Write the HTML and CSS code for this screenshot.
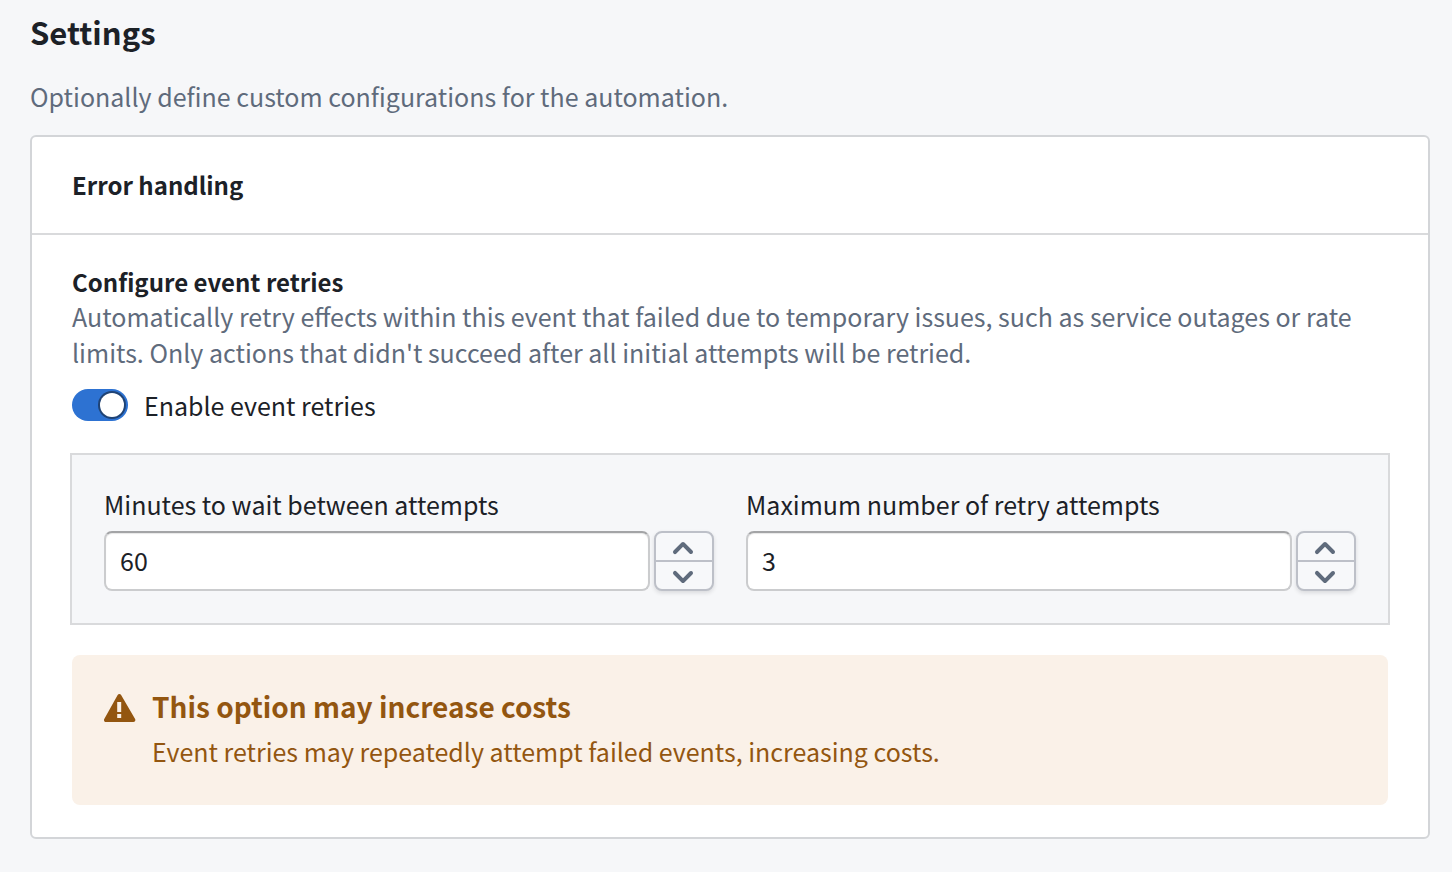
FILE: index.html
```html
<!DOCTYPE html>
<html lang="en">
    <head>
        <meta charset="utf-8">
        <meta name="viewport" content="width=device-width, initial-scale=1">
        <title>Settings</title>
        <link rel="stylesheet" href="styles.css">
    </head>
    <body>
      <main class="settings">
        <h1 class="title">Settings</h1>
        <p class="muted">Optionally define custom configurations for the automation.</p>

        <section class="card">
          <div class="card_header">
            <h2 class="heading">Error handling</h2>
          </div>

          <div class="card_body">
            <h3 class="heading">Configure event retries</h3>
            <p class="muted">Automatically retry effects within this event that failed due to temporary issues, such as service outages or rate limits. Only actions that didn't succeed after all initial attempts will be retried.</p>

            <label class="switch_row" for="retries">
              <input class="switch" type="checkbox" id="retries" role="switch" checked>
              Enable event retries
            </label>

            <div class="panel">
              <div class="field">
                <label for="minutes">Minutes to wait between attempts</label>
                <div class="number">
                  <input class="number_input" type="number" id="minutes" min="1" value="60">
                  <div class="stepper">
                    <button class="step" type="button" aria-label="Increase minutes" onclick="minutes.stepUp()">
                      <svg class="icon" viewBox="0 0 16 16"><path d="M12.71 9.29l-4-4C8.53 5.11 8.28 5 8 5s-.53.11-.71.29l-4 4a1.003 1.003 0 001.42 1.42L8 7.41l3.29 3.29c.18.19.43.3.71.3a1.003 1.003 0 00.71-1.71z"/></svg>
                    </button>
                    <button class="step" type="button" aria-label="Decrease minutes" onclick="minutes.stepDown()">
                      <svg class="icon" viewBox="0 0 16 16"><path d="M12 5c-.28 0-.53.11-.71.29L8 8.59l-3.29-3.3a1.003 1.003 0 00-1.42 1.42l4 4c.18.18.43.29.71.29s.53-.11.71-.29l4-4A1.003 1.003 0 0012 5z"/></svg>
                    </button>
                  </div>
                </div>
              </div>

              <div class="field">
                <label for="attempts">Maximum number of retry attempts</label>
                <div class="number">
                  <input class="number_input" type="number" id="attempts" min="1" value="3">
                  <div class="stepper">
                    <button class="step" type="button" aria-label="Increase attempts" onclick="attempts.stepUp()">
                      <svg class="icon" viewBox="0 0 16 16"><path d="M12.71 9.29l-4-4C8.53 5.11 8.28 5 8 5s-.53.11-.71.29l-4 4a1.003 1.003 0 001.42 1.42L8 7.41l3.29 3.29c.18.19.43.3.71.3a1.003 1.003 0 00.71-1.71z"/></svg>
                    </button>
                    <button class="step" type="button" aria-label="Decrease attempts" onclick="attempts.stepDown()">
                      <svg class="icon" viewBox="0 0 16 16"><path d="M12 5c-.28 0-.53.11-.71.29L8 8.59l-3.29-3.3a1.003 1.003 0 00-1.42 1.42l4 4c.18.18.43.29.71.29s.53-.11.71-.29l4-4A1.003 1.003 0 0012 5z"/></svg>
                    </button>
                  </div>
                </div>
              </div>
            </div>

            <div class="callout">
              <svg class="icon" viewBox="0 0 16 16"><path d="M15.54 13.5l.01-.01-7-12-.01.01c-.17-.3-.48-.5-.85-.5s-.67.2-.85.5l-.01-.01-6.7 12 .01.01c-.09.15-.15.31-.15.5 0 .55.3 1 .7 1h14c.55 0 1-.45 1-1 0-.19-.06-.35-.15-.5zM8.6 12.99h-2v-2h2v2zm0-3h-2v-5h2v5z"/></svg>
              <div class="callout_text">
                <h4 class="callout_title">This option may increase costs</h4>
                <p>Event retries may repeatedly attempt failed events, increasing costs.</p>
              </div>
            </div>
          </div>
        </section>
      </main>
    </body>
</html>
```
FILE: styles.css
```css
* {
  box-sizing: border-box;
}

body {
  margin: 0;
  background: #f6f7f9;
  color: #1c2127;
  font-family: "Noto Sans CJK SC", "Noto Sans", sans-serif;
  font-size: 25px;
  line-height: 36px;
}

h1, h2, h3, h4, p {
  margin: 0;
}

.settings {
  padding: 10px 22px 32px 30px;
}

.title {
  margin-bottom: 24px;
  font-size: 31px;
  line-height: 44px;
}

.heading {
  font-size: 24px;
  line-height: 32px;
}

.muted {
  color: #5f6b7c;
}

/* card */
.card {
  margin-top: 21px;
  border: 2px solid #d3d5d8;
  border-radius: 6px;
  background: #fff;
}

.card_header {
  padding: 32px 40px;
  border-bottom: 2px solid #d9dadc;
}

.card_body {
  padding: 31px 40px 32px;
}

/* switch */
.switch_row {
  display: flex;
  align-items: center;
  gap: 16px;
  margin: 17px 0 32px;
}

.switch {
  appearance: none;
  display: flex;
  justify-content: flex-end;
  width: 56px;
  height: 32px;
  margin: 0;
  padding: 4px;
  border-radius: 16px;
  background: #2d72d2;
}

.switch::before {
  content: "";
  width: 24px;
  height: 24px;
  border-radius: 50%;
  background: #fff;
  box-shadow: 0 0 0 2px rgba(17, 20, 24, 0.5);
}

.switch:not(:checked) {
  justify-content: flex-start;
  background: #8f99a8;
}

/* number fields */
.panel {
  display: grid;
  grid-template-columns: 1fr 1fr;
  gap: 32px;
  padding: 31px 32px 32px;
  background: #f6f7f9;
  box-shadow: 0 0 0 2px #d9dadc;
}

.field {
  display: flex;
  flex-direction: column;
  gap: 9px;
}

.number {
  display: flex;
  gap: 4px;
  height: 60px;
}

.number_input {
  appearance: textfield;
  flex: 1;
  min-width: 0;
  padding: 0 14px 2px;
  border: 2px solid #cbccce;
  border-top-color: #a3a4a6;
  border-radius: 8px;
  background: #fff;
  box-shadow: inset 0 1px 1px rgba(17, 20, 24, 0.1);
  color: #1c2127;
  font: inherit;
}

.number_input::-webkit-inner-spin-button {
  appearance: none;
}

.stepper {
  display: flex;
  flex-direction: column;
  width: 60px;
  border: 2px solid #bdc0c8;
  border-radius: 8px;
  background: #f7f8fa;
  box-shadow: 0 2px 4px rgba(17, 20, 24, 0.12);
}

.step {
  display: flex;
  flex: 1;
  align-items: center;
  justify-content: center;
  min-height: 0;
  padding: 2px 2px 0 0;
  border: none;
  background: none;
  color: #5f6b7c;
}

.step + .step {
  border-top: 2px solid #bdc0c8;
}

.icon {
  flex: none;
  width: 32px;
  height: 32px;
  fill: currentColor;
}

/* warning */
.callout {
  display: flex;
  gap: 16px;
  margin-top: 32px;
  padding: 30px 32px 36px;
  border-radius: 8px;
  background: #faf1e8;
  color: #935610;
}

.callout .icon {
  margin-top: 7px;
}

.callout_title {
  margin-bottom: 6px;
  font-size: 28px;
  line-height: 42px;
}
```
